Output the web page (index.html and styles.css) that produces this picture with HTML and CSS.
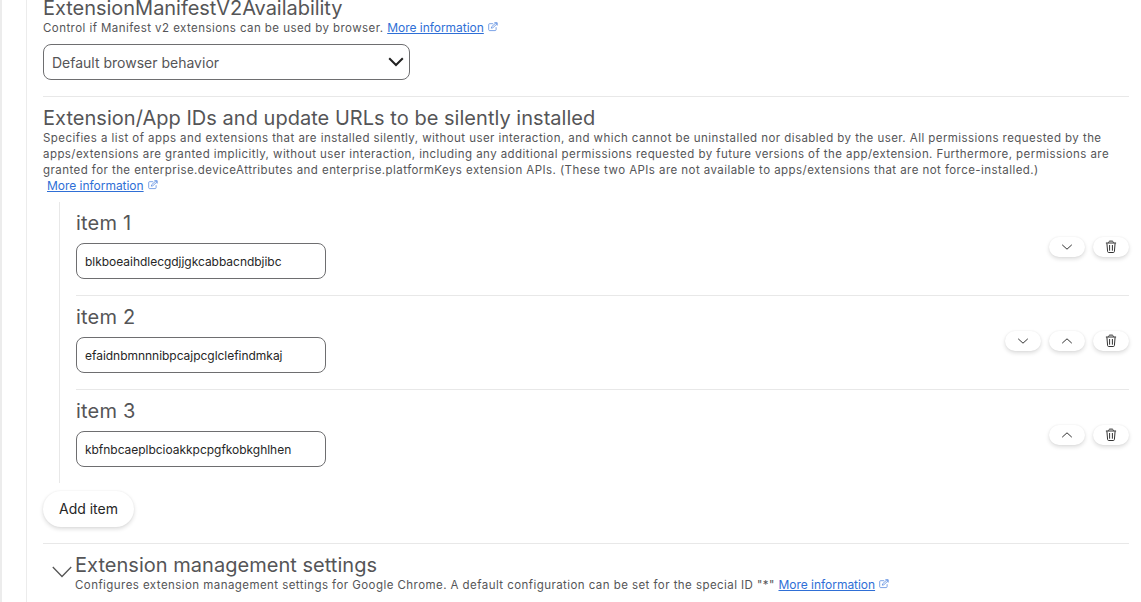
FILE: index.html
```
<!DOCTYPE html>
<html lang="en">
<head>
    <meta charset="UTF-8">
    <meta name="viewport" content="width=device-width, initial-scale=1.0">
    <title>Extension settings</title>
    <link rel="stylesheet" href="styles.css">
</head>
<body>
    <!-- Shared icons -->
    <svg class="icon-defs" width="0" height="0">
        <symbol id="icon-external" viewBox="0 0 10 10">
            <path d="M5.2 1.7H1.6a.9.9 0 0 0-.9.9v5.1c0 .5.4.9.9.9h5.6c.5 0 .9-.4.9-.9V5.2M3.3 6.2l.4-1.5L8 .8l1.1 1-4.3 4zM6.3.7h2.9v2.9"/>
        </symbol>
        <symbol id="icon-down" viewBox="0 0 12 12">
            <path d="M1.2 3.8L6 8.2l4.8-4.4"/>
        </symbol>
        <symbol id="icon-up" viewBox="0 0 12 12">
            <path d="M1.2 8.2L6 3.8l4.8 4.4"/>
        </symbol>
        <symbol id="icon-trash" viewBox="0 0 12 14">
            <path d="M.9 3h10.2M3.6 2.8c0-1.1.6-1.7 1.4-1.7h2c.8 0 1.4.6 1.4 1.7M1.9 3.2l.7 8.3c.1.7.4 1 1 1h4.8c.6 0 .9-.3 1-1l.7-8.3M4.6 5v5.7M7.4 5v5.7"/>
        </symbol>
    </svg>

    <div class="page">
        <div class="panel">
            <div class="setting">
                <h2>ExtensionManifestV2Availability</h2>
                <p>Control if Manifest v2 extensions can be used by browser. <a class="more" href="#">More information</a><svg class="external"><use href="#icon-external"/></svg></p>
                <div class="select">
                    <span>Default browser behavior</span>
                    <svg class="select-arrow" viewBox="0 0 16 10"><path d="M1.2 1.2L8 8l6.8-6.8"/></svg>
                </div>
            </div>

            <div class="setting">
                <h2>Extension/App IDs and update URLs to be silently installed</h2>
                <p>Specifies a list of apps and extensions that are installed silently, without user interaction, and which cannot be uninstalled nor disabled by the user. All permissions requested by the apps/extensions are granted implicitly, without user interaction, including any additional permissions requested by future versions of the app/extension. Furthermore, permissions are granted for the enterprise.deviceAttributes and enterprise.platformKeys extension APIs. (These two APIs are not available to apps/extensions that are not force-installed.)<br><a class="more indent" href="#">More information</a><svg class="external"><use href="#icon-external"/></svg></p>

                <div class="items">
                    <div class="item">
                        <div>
                            <h2>item 1</h2>
                            <input type="text" value="blkboeaihdlecgdjjgkcabbacndbjibc">
                        </div>
                        <div class="actions">
                            <button class="icon-btn" aria-label="Move down"><svg class="chevron"><use href="#icon-down"/></svg></button>
                            <button class="icon-btn" aria-label="Delete"><svg class="trash"><use href="#icon-trash"/></svg></button>
                        </div>
                    </div>
                    <div class="item">
                        <div>
                            <h2>item 2</h2>
                            <input type="text" value="efaidnbmnnnibpcajpcglclefindmkaj">
                        </div>
                        <div class="actions">
                            <button class="icon-btn" aria-label="Move down"><svg class="chevron"><use href="#icon-down"/></svg></button>
                            <button class="icon-btn" aria-label="Move up"><svg class="chevron"><use href="#icon-up"/></svg></button>
                            <button class="icon-btn" aria-label="Delete"><svg class="trash"><use href="#icon-trash"/></svg></button>
                        </div>
                    </div>
                    <div class="item">
                        <div>
                            <h2>item 3</h2>
                            <input type="text" value="kbfnbcaeplbcioakkpcpgfkobkghlhen">
                        </div>
                        <div class="actions">
                            <button class="icon-btn" aria-label="Move up"><svg class="chevron"><use href="#icon-up"/></svg></button>
                            <button class="icon-btn" aria-label="Delete"><svg class="trash"><use href="#icon-trash"/></svg></button>
                        </div>
                    </div>
                </div>
                <button class="add-btn">Add item</button>
            </div>

            <div class="setting group">
                <svg class="expander" viewBox="0 0 20 12"><path d="M.8 1L10 10.5 19.2 1"/></svg>
                <div>
                    <h2>Extension management settings</h2>
                    <p>Configures extension management settings for Google Chrome. A default configuration can be set for the special ID "*" <a class="more" href="#">More information</a><svg class="external"><use href="#icon-external"/></svg></p>
                </div>
            </div>
        </div>
    </div>
</body>
</html>
```
FILE: styles.css
```
* {
    margin: 0;
    padding: 0;
    box-sizing: border-box;
    font-family: Inter, sans-serif;
}

body {
    background: #fff;
    color: #555557;
    height: 602px;
    overflow: hidden;
}

.icon-defs {
    display: none;
}

.page {
    height: 602px;
    border-left: 2px solid #ececec;
    padding-left: 24px;
}

.panel {
    height: 602px;
    border-left: 1px solid #ececec;
    padding: 0 12px 0 16px;
    overflow: hidden;
}

.setting {
    padding: 9px 0 16px;
    border-bottom: 1px solid #e8e8e8;
}

.setting:first-child {
    margin-top: -13px;
}

.setting:last-child {
    border-bottom: none;
}

h2 {
    font-size: 20px;
    font-weight: 400;
    line-height: 24px;
    letter-spacing: 0.03px;
}

.setting:first-child h2 {
    letter-spacing: -0.03px;
}

.item h2 {
    letter-spacing: 0.2px;
}

p {
    font-size: 11.5px;
    line-height: 16px;
    letter-spacing: 0.44px;
}

.more {
    font-size: 12px;
    color: #2f6fd6;
    letter-spacing: -0.03px;
}

.indent {
    margin-left: 4px;
}

.external {
    width: 10px;
    height: 10px;
    margin-left: 4px;
    fill: none;
    stroke: #5a8ce0;
    stroke-width: 0.8;
}

.select {
    width: 367px;
    height: 36px;
    margin-top: 8px;
    padding: 0 5px 0 8px;
    border: 1px solid #6e6e70;
    border-radius: 8px;
    display: flex;
    align-items: center;
    justify-content: space-between;
    font-size: 14px;
}

.select-arrow {
    width: 16px;
    height: 10px;
    fill: none;
    stroke: #222;
    stroke-width: 2;
}

.items {
    margin: 8px 0 8px 16px;
    padding-left: 16px;
    border-left: 1px solid #e8e8e8;
}

.item {
    display: flex;
    justify-content: space-between;
    align-items: flex-start;
    height: 94px;
    padding-top: 9px;
    border-bottom: 1px solid #e8e8e8;
}

.item:last-child {
    height: 93px;
    border-bottom: none;
}

.item input {
    display: block;
    width: 250px;
    height: 36px;
    margin-top: 8px;
    padding: 0 8px;
    border: 1px solid #6e6e70;
    border-radius: 8px;
    font-size: 12px;
    letter-spacing: -0.03px;
    color: #262626;
}

.actions {
    display: flex;
    gap: 8px;
    margin-top: 26px;
}

.icon-btn {
    width: 36px;
    height: 20px;
    border: none;
    border-radius: 10px;
    background: #fff;
    box-shadow: 0 2px 4px rgba(0,0,0,0.14), 0 0 2px rgba(0,0,0,0.06);
    display: flex;
    align-items: center;
    justify-content: center;
}

.icon-btn svg {
    fill: none;
    stroke: #333;
    stroke-width: 1;
}

.chevron {
    width: 12px;
    height: 12px;
}

.trash {
    width: 12px;
    height: 14px;
}

.add-btn {
    display: block;
    width: 91px;
    height: 36px;
    border: none;
    border-radius: 18px;
    background: #fff;
    box-shadow: 0 2px 4px rgba(0,0,0,0.14), 0 0 2px rgba(0,0,0,0.06);
    font-size: 14px;
    line-height: 36px;
    color: #262626;
}

.group {
    display: flex;
}

.expander {
    width: 20px;
    height: 12px;
    margin: 13px 3px 0 9px;
    fill: none;
    stroke: #555;
    stroke-width: 1.3;
}
```
